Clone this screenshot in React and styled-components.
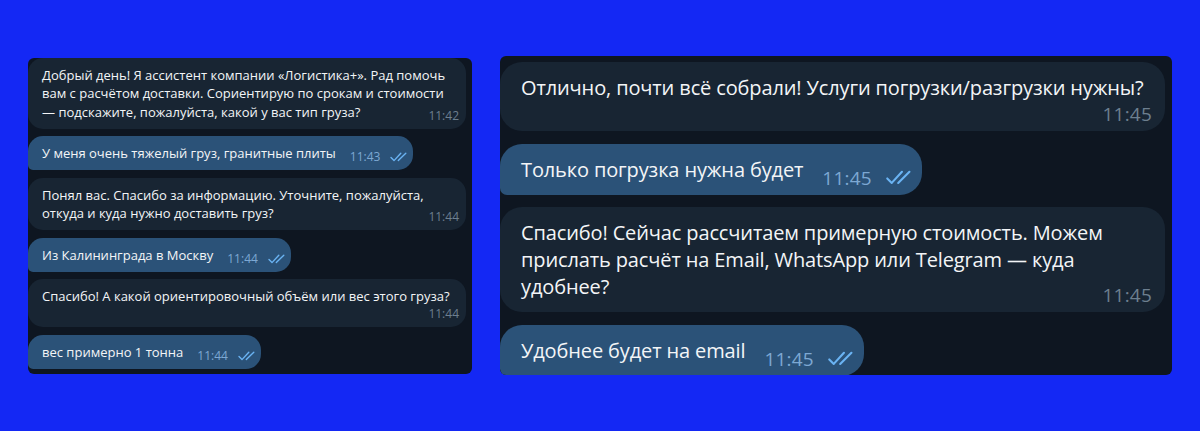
import React from "react";
import styled, { createGlobalStyle, css } from "styled-components";

const Global = createGlobalStyle`
  html, body { margin: 0; padding: 0; }
  body {
    background: #1428f4;
    font-family: "Open Sans", "Noto Sans", sans-serif;
    -webkit-font-smoothing: antialiased;
  }
`;

const SIZES = {
  sm: {
    font: 13, line: 18.5, padTop: 8, padBottom: 5, padLeft: 14, padRightIn: 7, padRightOut: 6,
    timeFont: 12, timeLine: 16, metaInline: 5, metaDropped: 0.5, metaGap: 14, checkGap: 10,
    checkW: 17, checkH: 10, radius: 15, tail: 5, tracking: 0, timeTracking: 0,
  },
  lg: {
    font: 20, line: 27, padTop: 12, padBottom: 6, padLeft: 21, padRightIn: 13, padRightOut: 10,
    timeFont: 19, timeLine: 22, metaInline: 11, metaDropped: 2, metaGap: 19, checkGap: 13,
    checkW: 27, checkH: 15, radius: 22, tail: 7, tracking: -0.13, timeTracking: 0.2,
  },
};

const Page = styled.div`
  width: 1200px;
  height: 431px;
  box-sizing: border-box;
  padding-left: 28px;
  display: flex;
  align-items: center;
  gap: 28px;
`;

const Panel = styled.div`
  background: #0e1621;
  border-radius: 6px;
  overflow: hidden;
  display: flex;
  flex-direction: column;
  align-items: flex-start;
  box-sizing: border-box;
  ${({ $size }) =>
    $size === "sm"
      ? css`
          width: 444px;
          height: 316px;
          gap: 7.5px;
          padding: 0 6px 0 0;
        `
      : css`
          width: 672px;
          height: 319px;
          gap: 12.5px;
          padding: 6px 7px 0 0;
        `}
`;

const Bubble = styled.div`
  display: flow-root;
  box-sizing: border-box;
  color: #f3f5f7;
  ${({ $size, $out }) => {
    const s = SIZES[$size];
    return css`
      font-size: ${s.font}px;
      line-height: ${s.line}px;
      letter-spacing: ${s.tracking}px;
      padding: ${s.padTop}px ${$out ? s.padRightOut : s.padRightIn}px ${s.padBottom}px ${s.padLeft}px;
      border-radius: ${s.radius}px ${s.radius}px ${s.radius}px ${$out ? s.tail : s.radius}px;
      background: ${$out ? "#2b5278" : "#182533"};
      ${$out ? "" : "align-self: stretch;"}
    `;
  }}
`;

const Meta = styled.span`
  float: right;
  display: inline-flex;
  align-items: center;
  ${({ $size, $out, $dropped }) => {
    const s = SIZES[$size];
    return css`
      font-size: ${s.timeFont}px;
      line-height: ${s.timeLine}px;
      letter-spacing: ${s.timeTracking}px;
      margin-top: ${$dropped ? s.metaDropped : s.metaInline}px;
      margin-left: ${s.metaGap}px;
      gap: ${s.checkGap}px;
      color: ${$out ? "#7da8d3" : "#6d7f8f"};
    `;
  }}
`;

const Check = styled.svg`
  display: block;
  color: #6ab3f3;
`;

function DoubleCheck({ size }) {
  const s = SIZES[size];
  return (
    <Check width={s.checkW} height={s.checkH} viewBox="0 0 17 10" fill="none">
      <path d="M1 5.6 L4 8.6 L10.8 1.2" stroke="currentColor" strokeWidth="1.4" strokeLinecap="round" strokeLinejoin="round" />
      <path d="M8.3 8.6 L15.8 1.2" stroke="currentColor" strokeWidth="1.4" strokeLinecap="round" />
    </Check>
  );
}

function Message({ size, out, dropped, time, children }) {
  return (
    <Bubble $size={size} $out={out}>
      {children}
      <Meta $size={size} $out={out} $dropped={dropped}>
        {time}
        {out && <DoubleCheck size={size} />}
      </Meta>
    </Bubble>
  );
}

const left = [
  { text: "Добрый день! Я ассистент компании «Логистика+». Рад помочь вам с расчётом доставки. Сориентирую по срокам и стоимости — подскажите, пожалуйста, какой у вас тип груза?", time: "11:42" },
  { text: "У меня очень тяжелый груз, гранитные плиты", time: "11:43", out: true },
  { text: "Понял вас. Спасибо за информацию. Уточните, пожалуйста, откуда и куда нужно доставить груз?", time: "11:44" },
  { text: "Из Калининграда в Москву", time: "11:44", out: true },
  { text: "Спасибо! А какой ориентировочный объём или вес этого груза?", time: "11:44", dropped: true },
  { text: "вес примерно 1 тонна", time: "11:44", out: true },
];

const right = [
  { text: "Отлично, почти всё собрали! Услуги погрузки/разгрузки нужны?", time: "11:45", dropped: true },
  { text: "Только погрузка нужна будет", time: "11:45", out: true },
  { text: "Спасибо! Сейчас рассчитаем примерную стоимость. Можем прислать расчёт на Email, WhatsApp или Telegram — куда удобнее?", time: "11:45" },
  { text: "Удобнее будет на email", time: "11:45", out: true },
];

export default function App() {
  return (
    <>
      <Global />
      <Page>
        <Panel $size="sm">
          {left.map((m, i) => (
            <Message key={i} size="sm" out={m.out} dropped={m.dropped} time={m.time}>
              {m.text}
            </Message>
          ))}
        </Panel>
        <Panel $size="lg">
          {right.map((m, i) => (
            <Message key={i} size="lg" out={m.out} dropped={m.dropped} time={m.time}>
              {m.text}
            </Message>
          ))}
        </Panel>
      </Page>
    </>
  );
}
